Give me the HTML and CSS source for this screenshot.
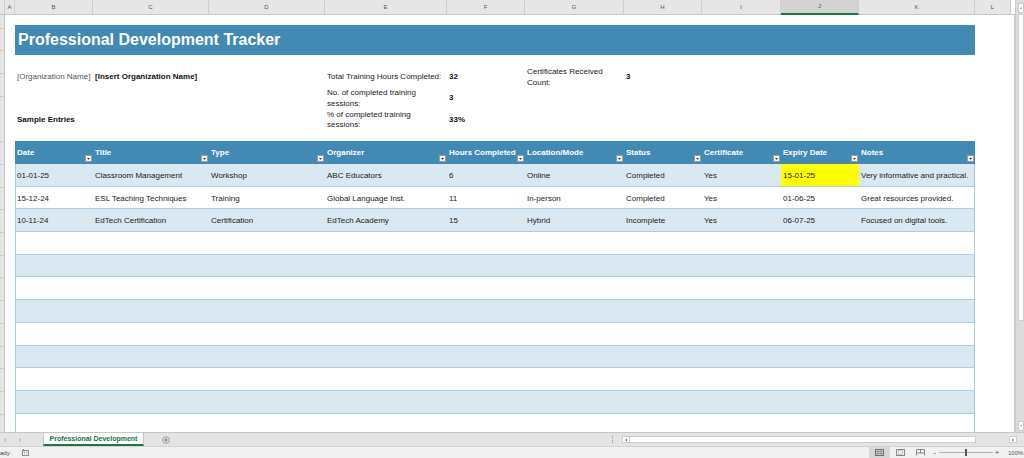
FILE: index.html
```html
<!DOCTYPE html>
<html>
<head>
<meta charset="utf-8">
<link rel="stylesheet" href="styles.css">
</head>
<body>
<div class="app">
  <div class="top">
    <div class="grid-area">
      <div class="colheads">
        <div class="ch w-corner"></div>
        <div class="ch w-a">A</div>
        <div class="ch w-b">B</div>
        <div class="ch w-c">C</div>
        <div class="ch w-d">D</div>
        <div class="ch w-e">E</div>
        <div class="ch w-f">F</div>
        <div class="ch w-g">G</div>
        <div class="ch w-h">H</div>
        <div class="ch w-i">I</div>
        <div class="ch w-j sel">J</div>
        <div class="ch w-k">K</div>
        <div class="ch w-l">L</div>
        <div class="ch-fill"></div>
      </div>
      <div class="main">
        <div class="rowheads"></div>
        <div class="sheet">
          <div class="title">Professional Development Tracker</div>
          <div class="info">
            <div class="cB r1 muted">[Organization Name]</div>
            <div class="cC r1 bold">[Insert Organization Name]</div>
            <div class="cE r1">Total Training Hours Completed:</div>
            <div class="cF r1 bold">32</div>
            <div class="cG r1">Certificates Received<br>Count:</div>
            <div class="cH r1 bold">3</div>
            <div class="cE r2">No. of completed training<br>sessions:</div>
            <div class="cF r2 bold">3</div>
            <div class="cB r3 bold">Sample Entries</div>
            <div class="cE r3">% of completed training<br>sessions:</div>
            <div class="cF r3 bold">33%</div>
          </div>
          <div class="table">
            <div class="thead">
              <div class="th">Date<svg class="flt" viewBox="0 0 7 7"><rect x="0.5" y="0.5" width="6" height="6" fill="#f3f3f3" stroke="#9c9c9c"/><path d="M2 3h3l-1.5 1.8z" fill="#333"/></svg></div>
              <div class="th">Title<svg class="flt" viewBox="0 0 7 7"><rect x="0.5" y="0.5" width="6" height="6" fill="#f3f3f3" stroke="#9c9c9c"/><path d="M2 3h3l-1.5 1.8z" fill="#333"/></svg></div>
              <div class="th">Type<svg class="flt" viewBox="0 0 7 7"><rect x="0.5" y="0.5" width="6" height="6" fill="#f3f3f3" stroke="#9c9c9c"/><path d="M2 3h3l-1.5 1.8z" fill="#333"/></svg></div>
              <div class="th">Organizer<svg class="flt" viewBox="0 0 7 7"><rect x="0.5" y="0.5" width="6" height="6" fill="#f3f3f3" stroke="#9c9c9c"/><path d="M2 3h3l-1.5 1.8z" fill="#333"/></svg></div>
              <div class="th">Hours Completed<svg class="flt" viewBox="0 0 7 7"><rect x="0.5" y="0.5" width="6" height="6" fill="#f3f3f3" stroke="#9c9c9c"/><path d="M2 3h3l-1.5 1.8z" fill="#333"/></svg></div>
              <div class="th">Location/Mode<svg class="flt" viewBox="0 0 7 7"><rect x="0.5" y="0.5" width="6" height="6" fill="#f3f3f3" stroke="#9c9c9c"/><path d="M2 3h3l-1.5 1.8z" fill="#333"/></svg></div>
              <div class="th">Status<svg class="flt" viewBox="0 0 7 7"><rect x="0.5" y="0.5" width="6" height="6" fill="#f3f3f3" stroke="#9c9c9c"/><path d="M2 3h3l-1.5 1.8z" fill="#333"/></svg></div>
              <div class="th">Certificate<svg class="flt" viewBox="0 0 7 7"><rect x="0.5" y="0.5" width="6" height="6" fill="#f3f3f3" stroke="#9c9c9c"/><path d="M2 3h3l-1.5 1.8z" fill="#333"/></svg></div>
              <div class="th">Expiry Date<svg class="flt" viewBox="0 0 7 7"><rect x="0.5" y="0.5" width="6" height="6" fill="#f3f3f3" stroke="#9c9c9c"/><path d="M2 3h3l-1.5 1.8z" fill="#333"/></svg></div>
              <div class="th">Notes<svg class="flt" viewBox="0 0 7 7"><rect x="0.5" y="0.5" width="6" height="6" fill="#f3f3f3" stroke="#9c9c9c"/><path d="M2 3h3l-1.5 1.8z" fill="#333"/></svg></div>
            </div>
            <div class="tbody">
              <div class="tr band">
                <div class="td">01-01-25</div><div class="td">Classroom Management</div><div class="td">Workshop</div><div class="td">ABC Educators</div><div class="td">6</div><div class="td">Online</div><div class="td">Completed</div><div class="td">Yes</div><div class="td hl">15-01-25</div><div class="td">Very informative and practical.</div>
              </div>
              <div class="tr">
                <div class="td">15-12-24</div><div class="td">ESL Teaching Techniques</div><div class="td">Training</div><div class="td">Global Language Inst.</div><div class="td">11</div><div class="td">In-person</div><div class="td">Completed</div><div class="td">Yes</div><div class="td">01-06-25</div><div class="td">Great resources provided.</div>
              </div>
              <div class="tr band">
                <div class="td">10-11-24</div><div class="td">EdTech Certification</div><div class="td">Certification</div><div class="td">EdTech Academy</div><div class="td">15</div><div class="td">Hybrid</div><div class="td">Incomplete</div><div class="td">Yes</div><div class="td">06-07-25</div><div class="td">Focused on digital tools.</div>
              </div>
              <div class="tr"></div>
              <div class="tr band"></div>
              <div class="tr"></div>
              <div class="tr band"></div>
              <div class="tr"></div>
              <div class="tr band"></div>
              <div class="tr"></div>
              <div class="tr band"></div>
              <div class="tr"></div>
            </div>
          </div>
        </div>
      </div>
    </div>
    <div class="vscroll">
      <div class="vs-btn"><svg viewBox="0 0 6 8" class="vs-arrow"><path d="M1.5 5h3L3 3z" fill="#777"/></svg></div>
      <div class="vs-thumb"></div>
      <div class="vs-track"></div>
      <div class="vs-btn"><svg viewBox="0 0 6 8" class="vs-arrow"><path d="M1.5 3h3L3 5z" fill="#777"/></svg></div>
    </div>
  </div>
  <div class="tabbar">
    <div class="nav">
      <svg class="nav-arrow" viewBox="0 0 4 6"><path d="M3 1v4L1 3z" fill="#b8b8b8"/></svg>
      <svg class="nav-arrow" viewBox="0 0 4 6"><path d="M1 1v4l2-2z" fill="#b8b8b8"/></svg>
    </div>
    <div class="tab"><span class="tab-label">Professional Development</span></div>
    <svg class="add" viewBox="0 0 8 8"><circle cx="4" cy="4" r="3.3" fill="none" stroke="#8a8a8a" stroke-width="0.8"/><path d="M4 2.3v3.4M2.3 4h3.4" stroke="#666" stroke-width="0.8"/></svg>
    <div class="spacer"></div>
    <div class="hscroll">
      <div class="dots"></div>
      <div class="hs-btn"><svg viewBox="0 0 6 6" class="hs-arrow"><path d="M4 1.5v3L2 3z" fill="#777"/></svg></div>
      <div class="hs-thumb"></div>
      <div class="hs-track"></div>
      <div class="hs-btn"><svg viewBox="0 0 6 6" class="hs-arrow"><path d="M2 1.5v3L4 3z" fill="#777"/></svg></div>
    </div>
  </div>
  <div class="status">
    <span class="ready">ady</span>
    <svg class="macro" viewBox="0 0 7 7"><rect x="0.5" y="1.5" width="6" height="5" fill="#fff" stroke="#8d8d8d"/><path d="M0.5 3.5h6M2.5 1.5v5M4.5 1.5v5" stroke="#b0b0b0" stroke-width="0.6"/><circle cx="1.5" cy="1.2" r="1" fill="#7a7a7a"/></svg>
    <div class="spacer"></div>
    <div class="views">
      <div class="vbtn on"><svg viewBox="0 0 9 7" class="vicon"><rect x="0.5" y="0.5" width="8" height="6" fill="none" stroke="#6f6f6f"/><path d="M3 0.5v6M6 0.5v6M0.5 2.5h8M0.5 4.5h8" stroke="#6f6f6f" stroke-width="0.6"/></svg></div>
      <div class="vbtn"><svg viewBox="0 0 9 7" class="vicon"><rect x="0.5" y="0.5" width="8" height="6" fill="none" stroke="#8a8a8a"/><rect x="2.5" y="1.5" width="4" height="4" fill="none" stroke="#a8a8a8" stroke-width="0.6"/></svg></div>
      <div class="vbtn"><svg viewBox="0 0 9 7" class="vicon"><path d="M0.5 6.5v-6h8v6M0.5 4h8M4.5 0.5v3.5" fill="none" stroke="#8a8a8a"/></svg></div>
      <div class="zminus">-</div>
      <div class="slider"><div class="sl-line"></div><div class="sl-thumb"></div></div>
      <div class="zplus">+</div>
      <div class="pct">100%</div>
    </div>
  </div>
</div>
</body>
</html>
```
FILE: styles.css
```css
* { box-sizing: border-box; margin: 0; padding: 0; }
html, body {
  width: 1024px;
  height: 458px;
  overflow: hidden;
  background: #fff;
  font-family: "Liberation Sans", Arial, sans-serif;
}
.app { display: flex; flex-direction: column; width: 1024px; height: 458px; }
.top { display: flex; height: 432px; }
.grid-area { width: 1015px; display: flex; flex-direction: column; }

/* column headers */
.colheads {
  height: 15px;
  display: flex;
  background: #e6e6e6;
  border-bottom: 1px solid #c6c6c6;
}
.ch {
  font-size: 6px;
  color: #555;
  text-align: center;
  line-height: 14px;
  border-right: 1px solid #cfcfcf;
  flex: none;
}
.ch.sel { background: #d2d2d2; border-bottom: 2px solid #217346; color: #217346; line-height: 13px; height: 15px; }
.w-corner { width: 5px; }
.w-a { width: 10px; }
.w-b { width: 78px; }
.w-c { width: 116px; }
.w-d { width: 116px; }
.w-e { width: 122px; }
.w-f { width: 78px; }
.w-g { width: 99px; }
.w-h { width: 78px; }
.w-i { width: 79px; }
.w-j { width: 78px; }
.w-k { width: 116px; }
.w-l { width: 36px; }
.ch-fill { flex: 1; background: #fff; }

.main { flex: 1; display: flex; overflow: hidden; }
.rowheads {
  width: 5px;
  flex: none;
  background: repeating-linear-gradient(to bottom, #e6e6e6 0 21.7px, #c9c9c9 21.7px 22.7px);
  background-position: 0 -8.9px;
  border-right: 1px solid #c6c6c6;
}
.sheet { flex: 1; padding-left: 10px; overflow: hidden; border-right: 1px solid #c9c9c9; }

.title {
  margin-top: 10px;
  width: 960px;
  height: 30px;
  background: #4289b3;
  color: #fff;
  font-weight: bold;
  font-size: 16px;
  line-height: 30px;
  padding-left: 3px;
}

/* info block */
.info {
  display: grid;
  grid-template-columns: 78px 116px 116px 122px 78px 99px 78px 79px 78px 116px;
  grid-template-rows: 21px 21px 22px;
  margin-top: 12px;
  font-size: 8px;
  color: #222;
}
.info > div { display: flex; align-items: center; padding-left: 2px; line-height: 10.5px; white-space: nowrap; }
.muted { color: #555; }
.bold { font-weight: bold; color: #111; }
.cB { grid-column: 1; }
.cC { grid-column: 2; }
.cE { grid-column: 4; }
.cF { grid-column: 5; }
.cG { grid-column: 6; }
.cH { grid-column: 7; }
.r1 { grid-row: 1; }
.r2 { grid-row: 2; }
.r3 { grid-row: 3; }

/* table */
.table { margin-top: 10px; width: 960px; font-size: 8px; }
.thead {
  display: grid;
  grid-template-columns: 78px 116px 116px 122px 78px 99px 78px 79px 78px 116px;
  height: 23px;
  background: #4289b3;
  color: #fff;
  font-weight: bold;
}
.th { position: relative; display: flex; align-items: center; padding-left: 2px; white-space: nowrap; }
.flt { position: absolute; right: 1px; bottom: 2px; width: 7px; height: 7px; }

.tbody { border-left: 1px solid #a9cce1; border-right: 1px solid #a9cce1; }
.tr {
  display: grid;
  grid-template-columns: 77px 116px 116px 122px 78px 99px 78px 79px 78px 115px;
  height: 22.7px;
  border-bottom: 1px solid #a9cce1;
  color: #222;
}
.tr.band { background: #d9e8f1; }
.td { display: flex; align-items: center; padding-left: 1px; padding-top: 1px; white-space: nowrap; }
.tr .td:not(:first-child) { padding-left: 2px; }
.td.hl { background: #ffff00; }

/* vertical scrollbar */
.vscroll {
  width: 9px;
  background: #dcdcdc;
  border-left: 1px solid #c9c9c9;
  display: flex;
  flex-direction: column;
  padding-top: 3px;
  padding-bottom: 1px;
}
.vs-btn {
  height: 10px;
  background: #fff;
  border: 1px solid #cdcdcd;
  display: flex;
  align-items: center;
  justify-content: center;
  margin-left: 2px;
}
.vs-arrow { width: 6px; height: 8px; }
.vs-thumb { height: 307px; background: #fff; border: 1px solid #cdcdcd; margin-left: 2px; margin-top: 1px; }
.vs-track { flex: 1; }

/* tab bar */
.tabbar {
  height: 15px;
  display: flex;
  align-items: stretch;
  background: #e4e4e4;
  border-top: 1px solid #c6c6c6;
  border-bottom: 1px solid #d2d2d2;
}
.nav { width: 43px; display: flex; align-items: center; gap: 11px; padding-left: 3px; }
.nav-arrow { width: 4px; height: 6px; }
.tab {
  width: 101px;
  background: #fff;
  border-left: 1px solid #c6c6c6;
  border-right: 1px solid #c6c6c6;
  border-bottom: 2px solid #217346;
  display: flex;
  align-items: center;
  justify-content: center;
}
.tab-label { font-size: 7px; font-weight: bold; color: #217346; }
.add { width: 8px; height: 8px; margin-left: 18px; align-self: center; }
.spacer { flex: 1; }
.hscroll { width: 415px; display: flex; align-items: center; }
.dots {
  width: 1px;
  height: 7px;
  margin-left: 3px;
  margin-right: 9px;
  background: repeating-linear-gradient(to bottom, #9a9a9a 0 1px, transparent 1px 2px);
}
.hs-btn {
  width: 8px;
  height: 7px;
  background: #fff;
  border: 1px solid #cdcdcd;
  display: flex;
  align-items: center;
  justify-content: center;
}
.hs-arrow { width: 6px; height: 6px; }
.hs-thumb { width: 346px; height: 7px; background: #fff; border: 1px solid #cdcdcd; border-left: none; }
.hs-track { width: 33px; height: 7px; }

/* status bar */
.status {
  height: 11px;
  display: flex;
  align-items: center;
  background: #f1f1f1;
  font-size: 6px;
  color: #444;
}
.ready { width: 14px; }
.macro { width: 7px; height: 7px; margin-left: 8px; }
.views { width: 155px; height: 11px; display: flex; align-items: center; }
.vbtn { width: 20px; height: 11px; display: flex; align-items: center; justify-content: center; }
.vbtn.on { width: 21px; background: #d6d6d6; }
.vicon { width: 9px; height: 7px; }
.zminus { width: 9px; text-align: center; font-size: 8px; color: #555; }
.slider { width: 55px; height: 11px; position: relative; display: flex; align-items: center; }
.sl-line { width: 54px; height: 1px; background: #b0b0b0; }
.sl-thumb { position: absolute; left: 26px; top: 2px; width: 2px; height: 7px; background: #555; }
.zplus { width: 6px; text-align: center; font-size: 8px; color: #555; }
.pct { padding-left: 8px; color: #555; }
```
